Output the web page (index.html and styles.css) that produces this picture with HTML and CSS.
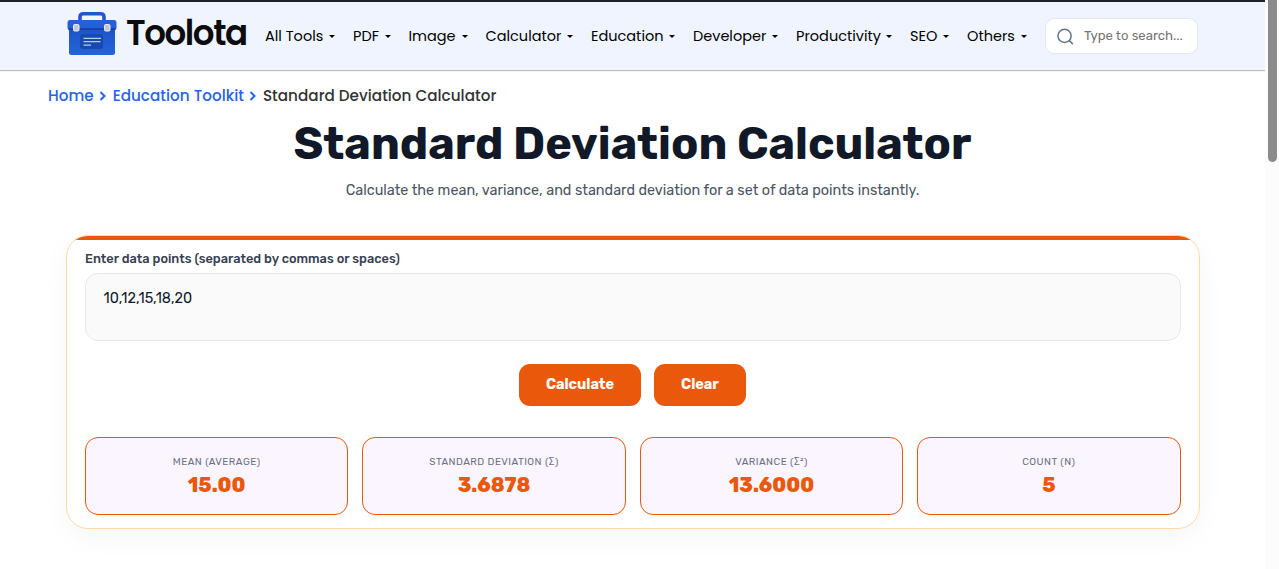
FILE: index.html
```html
<!DOCTYPE html>
<html lang="en">
<head>
    <meta charset="UTF-8">
    <meta name="viewport" content="width=device-width, initial-scale=1.0">
    <title>Standard Deviation Calculator</title>
    <link rel="stylesheet" href="styles.css">
</head>
<body>
    <div class="page">
        <header class="header">
            <a class="logo" href="#">
                <svg class="logo-icon" width="50" height="44" viewBox="0 0 50 44">
                    <defs>
                        <linearGradient id="box" x1="0" y1="0" x2="0" y2="1">
                            <stop offset="0" stop-color="#1c54c4"/>
                            <stop offset="1" stop-color="#2563dc"/>
                        </linearGradient>
                    </defs>
                    <path d="M13 9V5q0-3.200 3.500-3.200h17q3.500 0 3.500 3.200v4" fill="none" stroke="#2058c8" stroke-width="3.600"/>
                    <rect x="2" y="15" width="46" height="28" rx="2.500" fill="url(#box)"/>
                    <path d="M3 8h44q2.500 0 2.500 3v5.500H.5V11q0-3 2.500-3z" fill="#2461d8"/>
                    <path d="M1 17h48" stroke="#153f9b" stroke-width="1.500"/>
                    <rect x="13" y="22" width="23" height="15" rx="3" fill="#1948ae"/>
                    <path d="M16.500 26.300h17.500M16.500 29.700h17M16.500 33.200h7.500" stroke="#a9cdf7" stroke-width="1.300"/>
                    <rect x="6.500" y="12.500" width="5.500" height="6.500" rx="1.200" fill="#c3c8d0" stroke="#edf0f4"/>
                    <rect x="37.500" y="12.500" width="5.500" height="6.500" rx="1.200" fill="#c3c8d0" stroke="#edf0f4"/>
                </svg>
                <span class="logo-text">Toolota</span>
            </a>
            <nav class="nav">
                <a href="#">All Tools</a>
                <a href="#">PDF</a>
                <a href="#">Image</a>
                <a href="#">Calculator</a>
                <a href="#">Education</a>
                <a href="#">Developer</a>
                <a href="#">Productivity</a>
                <a href="#">SEO</a>
                <a href="#">Others</a>
            </nav>
            <div class="search">
                <svg width="17" height="17" viewBox="0 0 18 18" fill="none" stroke="#64748b" stroke-width="1.600">
                    <circle cx="8" cy="8.300" r="7"/>
                    <path d="M13.100 13.400l3.300 3.300" stroke-linecap="round"/>
                </svg>
                <input type="text" placeholder="Type to search...">
            </div>
        </header>

        <div class="breadcrumb">
            <a href="#">Home</a>
            <svg width="8" height="10" viewBox="0 0 8 10"><path d="M1.500 1l4 4-4 4"/></svg>
            <a href="#">Education Toolkit</a>
            <svg width="8" height="10" viewBox="0 0 8 10"><path d="M1.500 1l4 4-4 4"/></svg>
            <span>Standard Deviation Calculator</span>
        </div>

        <h1 class="title">Standard Deviation Calculator</h1>
        <p class="subtitle">Calculate the mean, variance, and standard deviation for a set of data points instantly.</p>

        <main class="card">
            <label class="label" for="data">Enter data points (separated by commas or spaces)</label>
            <textarea class="data" id="data">10,12,15,18,20</textarea>
            <div class="buttons">
                <button class="btn calculate">Calculate</button>
                <button class="btn clear">Clear</button>
            </div>
            <div class="results">
                <div class="result">
                    <p class="name">Mean (Average)</p>
                    <p class="value">15.00</p>
                </div>
                <div class="result">
                    <p class="name">Standard Deviation (σ)</p>
                    <p class="value">3.6878</p>
                </div>
                <div class="result">
                    <p class="name">Variance (σ²)</p>
                    <p class="value">13.6000</p>
                </div>
                <div class="result">
                    <p class="name">Count (n)</p>
                    <p class="value">5</p>
                </div>
            </div>
        </main>
    </div>
    <div class="scrollbar"><div class="thumb"></div></div>
</body>
</html>
```

FILE: styles.css
```css
* {
    box-sizing: border-box;
}
body {
    margin: 0;
    display: flex;
    height: 569px;
    overflow: hidden;
    background: #fff;
    font-family: Rubik, Roboto, sans-serif;
}
a {
    color: inherit;
    text-decoration: none;
}
.page {
    width: 1265px;
}
.header {
    display: flex;
    height: 70px;
    padding-left: 67px;
    background: #eff4ff;
    border-top: 2px solid #202124;
    box-shadow: 0 1px 1px rgba(0, 0, 0, 0.25);
    font-family: Poppins, Inter, sans-serif;
}
.logo {
    display: flex;
    width: 198px;
    padding-top: 10px;
}
.logo-icon {
    flex-shrink: 0;
    margin-right: 9px;
}
.logo-text {
    height: 42px;
    font-size: 35.500px;
    line-height: 41px;
    font-weight: 600;
    letter-spacing: -1.500px;
    color: #0c0c0e;
    transform: scaleX(0.96);
    transform-origin: left;
}
.nav {
    display: grid;
    grid-template-columns: 88px 55.500px 77px 105.500px 102px 103px 114px 57px 78px;
    align-content: start;
    padding-top: 22px;
    font-size: 14.500px;
    line-height: 24px;
    color: #000;
}
.nav a {
    display: flex;
    align-items: center;
    justify-content: space-between;
    padding-right: 18px;
    white-space: nowrap;
}
.nav a::after {
    content: "";
    border: 3px solid transparent;
    border-top: 3.500px solid #000;
    border-bottom: 0;
}
.search {
    display: flex;
    align-items: center;
    width: 153px;
    height: 36px;
    margin-top: 16px;
    padding-left: 10.500px;
    background: #fff;
    border: 1px solid #e2e8f0;
    border-radius: 9px;
}
.search input {
    width: 110px;
    margin: 0 0 1px 10.500px;
    padding: 0;
    border: none;
    outline: none;
    font-family: Rubik, Roboto, sans-serif;
    font-size: 13.100px;
}
.search input::placeholder {
    color: #757575;
}
.breadcrumb {
    display: flex;
    align-items: center;
    height: 24px;
    margin: 13px 0 0 48px;
    font-family: Poppins, Inter, sans-serif;
    font-size: 15.200px;
    font-weight: 500;
    letter-spacing: 0.03px;
    color: #333;
}
.breadcrumb a {
    color: #2563eb;
}
.breadcrumb svg {
    margin: 2px 5.500px 0;
    fill: none;
    stroke: #2563eb;
    stroke-width: 2;
}
.title {
    margin: 9px 0 0;
    text-align: center;
    font-size: 45px;
    line-height: 56px;
    font-weight: 700;
    color: #111827;
}
.subtitle {
    margin: 9px 0 0;
    text-align: center;
    font-size: 14.400px;
    line-height: 20px;
    color: #4b5563;
}
.card {
    position: relative;
    width: 1134px;
    height: 294px;
    margin: 34px 0 0 66px;
    padding: 14px 18px;
    border: 1px solid #fed7aa;
    border-radius: 22px;
    overflow: hidden;
    box-shadow: 0 8px 28px rgba(0, 0, 0, 0.04);
}
/* orange strip along the top edge of the card */
.card::before {
    content: "";
    position: absolute;
    top: 0;
    left: 0;
    right: 0;
    height: 4px;
    background: #ea580c;
}
.label {
    display: block;
    font-size: 12.800px;
    line-height: 18px;
    font-weight: 500;
    color: #374151;
}
.data {
    display: block;
    width: 100%;
    height: 68px;
    margin-top: 5px;
    padding: 15px 18px 13px 17.600px;
    border: 1px solid #e5e7eb;
    border-radius: 13px;
    outline: none;
    resize: none;
    background: #fafafa;
    font-family: inherit;
    font-size: 14.400px;
    line-height: 20px;
    color: #111827;
}
.buttons {
    display: flex;
    justify-content: center;
    gap: 13px;
    margin-top: 23px;
    padding-right: 1px;
}
.btn {
    height: 42px;
    padding: 0 0 2px;
    border: none;
    border-radius: 11px;
    background: #ea580c;
    color: #fff;
    font-family: inherit;
    font-size: 14.400px;
    font-weight: 700;
    cursor: pointer;
}
.calculate {
    width: 122px;
}
.clear {
    width: 92px;
}
.results {
    display: grid;
    grid-template-columns: repeat(4, 1fr);
    gap: 14.100px;
    margin-top: 31px;
    padding-right: 0.5px;
}
.result {
    height: 78px;
    padding-top: 16px;
    border: 1px solid #ea580c;
    border-radius: 13px;
    background: #faf5ff;
    text-align: center;
}
.name {
    margin: 0;
    font-size: 10px;
    line-height: 16px;
    letter-spacing: 0.45px;
    text-transform: uppercase;
    color: #6b7280;
}
.value {
    margin: 3px 0 0;
    font-size: 20px;
    line-height: 24px;
    font-weight: 800;
    color: #ea580c;
}
.scrollbar {
    width: 14px;
    padding-left: 3px;
    background: #fcfcfc;
}
.thumb {
    width: 9px;
    height: 162px;
    border-radius: 0 0 5px 5px;
    background: #8b8b8b;
}
```
